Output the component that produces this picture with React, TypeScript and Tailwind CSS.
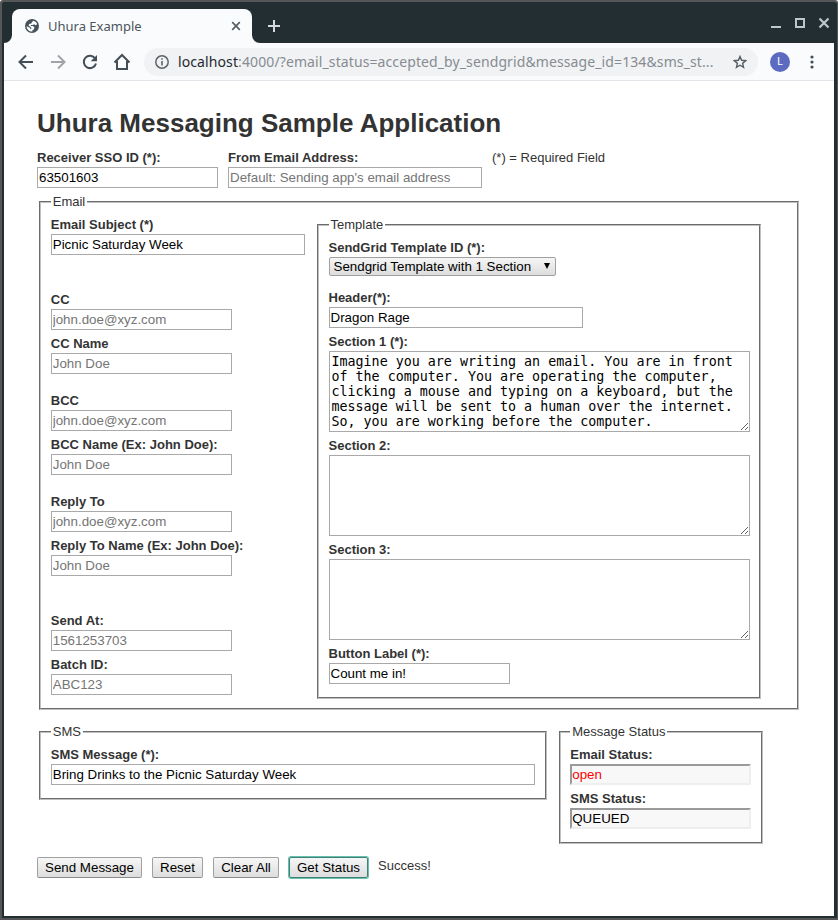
import React from "react";

const inputBase =
  "block h-[21px] border border-[#a9a9a9] bg-white p-px text-[13.333px] leading-[15px] text-black outline-none placeholder:text-[#757575]";

function Field({ label, value, placeholder, width = "w-[181px]" }: { label: string; value?: string; placeholder?: string; width?: string }) {
  return (
    <label className="flex flex-col items-start gap-[2px]">
      <span className="h-[15px] leading-[15px] font-bold whitespace-nowrap">{label}</span>
      <input className={`${inputBase} ${width}`} defaultValue={value} placeholder={placeholder} />
    </label>
  );
}

function Area({ label, value }: { label: string; value?: string }) {
  return (
    <label className="flex flex-col items-start gap-[2px]">
      <span className="h-[15px] leading-[15px] font-bold">{label}</span>
      <textarea
        className="block h-[81px] w-[421px] resize overflow-auto border border-[#a9a9a9] bg-white p-[2px] font-['DejaVu_Sans_Mono',monospace] text-[13.333px] leading-[15px] text-black outline-none"
        defaultValue={value}
        spellCheck={false}
      />
    </label>
  );
}

function Status({ label, value, color }: { label: string; value: string; color: string }) {
  return (
    <label className="flex flex-col items-start gap-[2px]">
      <span className="h-[15px] leading-[15px] font-bold">{label}</span>
      <input
        readOnly
        value={value}
        className={`block h-[21px] w-[181px] border-2 border-t-[#9a9a9a] border-r-[#eeeeee] border-b-[#eeeeee] border-l-[#9a9a9a] bg-[#f8f8f8] text-[13.333px] leading-[15px] outline-none ${color}`}
      />
    </label>
  );
}

function Group({ title, className, children }: { title: string; className: string; children: React.ReactNode }) {
  return (
    <fieldset className={`min-w-0 border-2 border-[#c0c0c0] pt-[7px] pl-[9.75px] [border-style:groove] ${className}`}>
      <legend className="h-4 px-[2px] leading-4">{title}</legend>
      {children}
    </fieldset>
  );
}

function Button({ children, width, focused = false }: { children: string; width: string; focused?: boolean }) {
  return (
    <button
      className={`h-[21px] rounded-[2px] border bg-linear-to-b from-[#f6f6f6] to-[#dddddd] text-[13.333px] leading-[19px] whitespace-nowrap text-black ${width} ${
        focused ? "border-[#3f8377] shadow-[0_0_0_1px_#67bfb0]" : "border-[#a0a0a0] border-b-[#8c8c8c]"
      }`}
    >
      {children}
    </button>
  );
}

function TitleBar() {
  return (
    <div className="flex h-[41px] items-end bg-[#232e33] pl-2">
      <div className="relative flex h-[34px] w-[240px] items-center rounded-t-lg bg-[#fafbfd] pr-[10px] pl-[13px] text-[#4a555b]">
        <svg className="absolute bottom-0 -left-2" width="8" height="8"><path d="M8 0v8H0a8 8 0 0 0 8-8Z" fill="#fafbfd" /></svg>
        <svg className="absolute -right-2 bottom-0" width="8" height="8"><path d="M0 0v8h8a8 8 0 0 1-8-8Z" fill="#fafbfd" /></svg>
        <svg width="14" height="14" viewBox="0 0 14 14" className="shrink-0">
          <circle cx="7" cy="7" r="7" fill="#45525a" />
          <path d="M8.300 1.700C10.200 2.200 11.700 3.500 12.200 5.300L10.500 6.200 9 5.200 7.700 6H5.600L6.200 7.100H8L9.500 8.600 8.800 10.400 7.400 11.300V12.600C4.300 12.800 1.600 10.400 1.500 7.300L4.600 8.600 5.400 10 6.600 9.300 5.600 7.900 3.500 6.500 4.200 4.900 6.300 4.500 6.900 3.200Z" fill="#fafbfd" />
        </svg>
        <span className="ml-[9px] text-[13px] leading-[18px]">Uhura Example</span>
        <svg className="ml-auto" width="12" height="12" viewBox="0 0 12 12"><path d="m2.200 2.200 7.600 7.600m0-7.600-7.600 7.600" stroke="#556067" strokeWidth="1.700" /></svg>
      </div>
      <svg className="mb-[11px] ml-4" width="12" height="12"><path d="M6 0v12M0 6h12" stroke="#d3dbde" strokeWidth="2" /></svg>
      <svg className="mr-[3px] mb-[11px] ml-auto" width="60" height="16">
        <path d="M0 11h10" stroke="#b9c8cd" strokeWidth="2" />
        <rect x="25" y="3" width="8" height="8" fill="none" stroke="#b9c8cd" strokeWidth="2" />
        <path d="m48.500 2.500 9 9m0-9-9 9" stroke="#b9c8cd" strokeWidth="2.200" />
      </svg>
    </div>
  );
}

function Toolbar() {
  return (
    <div className="flex h-[38px] items-center border-b border-[#e1e4e9] bg-[#fafbfd] pr-[20px] pl-[14px]">
      <svg width="16" height="16" viewBox="0 0 16 16" fill="none" stroke="#434e56" strokeWidth="2"><path d="M15 8H2M8 1.500 1.500 8 8 14.500" /></svg>
      <svg className="ml-4" width="16" height="16" viewBox="0 0 16 16" fill="none" stroke="#a0a4a7" strokeWidth="2"><path d="M1 8h13M8 1.500 14.500 8 8 14.500" /></svg>
      <svg className="ml-4" width="16" height="16" viewBox="0 0 16 16"><path d="M13.200 4.500A6.200 6.200 0 1 0 14 9.500" fill="none" stroke="#434e56" strokeWidth="2" /><path d="M15 1v6.300H8.700Z" fill="#434e56" /></svg>
      <svg className="ml-[15px]" width="18" height="18" viewBox="0 0 18 18" fill="none" stroke="#434e56" strokeWidth="2"><path d="M1.500 9.500 9 2l7.500 7.500M4 8v8h10V8" /></svg>
      <div className="ml-[13px] flex h-7 w-[614px] items-center rounded-full bg-[#f1f2f4] pr-[11px] pl-[11px]">
        <svg width="14" height="14" viewBox="0 0 14 14" className="shrink-0"><circle cx="7" cy="7" r="6.200" fill="none" stroke="#5c6368" strokeWidth="1.500" /><path d="M7 6v4.500M7 3.300v1.500" stroke="#5c6368" strokeWidth="1.600" /></svg>
        <span className="ml-[9px] text-[14px] leading-5 tracking-[0.105px] whitespace-nowrap text-[#868c91]"><span className="text-[#25292d]">localhost</span>:4000/?email_status=accepted_by_sendgrid&amp;message_id=134&amp;sms_st...</span>
        <svg className="ml-auto shrink-0" width="14" height="14" viewBox="0 0 14 14"><path d="m7 1.500 1.600 3.800 4.100.35-3.100 2.700.95 4.050L7 10.250 3.450 12.400l.95-4.050-3.100-2.700 4.100-.35Z" fill="none" stroke="#555d63" strokeWidth="1.400" /></svg>
      </div>
      <span className="ml-[12px] flex h-5 w-5 items-center justify-center rounded-full bg-[#5c6bc0] text-[11px] text-white">L</span>
      <svg className="ml-auto" width="4" height="14"><circle cx="2" cy="2" r="1.600" fill="#434e56" /><circle cx="2" cy="7" r="1.600" fill="#434e56" /><circle cx="2" cy="12" r="1.600" fill="#434e56" /></svg>
    </div>
  );
}

export default function App() {
  return (
    <div className="h-[920px] w-[838px] overflow-hidden rounded-t-[3px] border-2 border-r-[1px] border-[#555657] bg-[#232e33] font-['Liberation_Sans',Arial,sans-serif] text-[13px] text-[#333333]">
      <div className="flex h-[914px] flex-col border-r-[3px] border-l-2 border-[#232e33] bg-white">
        <header className="font-['Noto_Sans',sans-serif]">
          <TitleBar />
          <Toolbar />
        </header>
        <main className="px-[33px] pt-[27px]">
          <h1 className="h-[30px] text-[26px] leading-[30px] font-bold">Uhura Messaging Sample Application</h1>
          <div className="mt-[12px] flex gap-[10px]">
            <Field label="Receiver SSO ID (*):" value="63501603" />
            <Field label="From Email Address:" placeholder="Default: Sending app's email address" width="w-[254px]" />
            <span className="leading-[15px]">(*) = Required Field</span>
          </div>
          <Group title="Email" className="mt-[6px] ml-[2px] h-[516px] w-[760px]">
            <div className="flex">
              <div className="flex w-[266px] flex-col">
                <Field label="Email Subject (*)" value="Picnic Saturday Week" width="w-[254px]" />
                <div className="mt-[37px] flex flex-col gap-[6px]">
                  <Field label="CC" placeholder="john.doe@xyz.com" />
                  <Field label="CC Name" placeholder="John Doe" />
                </div>
                <div className="mt-[19px] flex flex-col gap-[6px]">
                  <Field label="BCC" placeholder="john.doe@xyz.com" />
                  <Field label="BCC Name (Ex: John Doe):" placeholder="John Doe" />
                </div>
                <div className="mt-[19px] flex flex-col gap-[6px]">
                  <Field label="Reply To" placeholder="john.doe@xyz.com" />
                  <Field label="Reply To Name (Ex: John Doe):" placeholder="John Doe" />
                </div>
                <div className="mt-[37px] flex flex-col gap-[6px]">
                  <Field label="Send At:" placeholder="1561253703" />
                  <Field label="Batch ID:" placeholder="ABC123" />
                </div>
              </div>
              <Group title="Template" className="h-[482px] w-[444px]">
                <div className="flex flex-col gap-[6px]">
                  <div className="mb-2 flex flex-col items-start gap-[2px]">
                    <span className="h-[15px] leading-[15px] font-bold">SendGrid Template ID (*):</span>
                    <button className="flex h-[19px] w-[227px] items-center justify-between rounded-[2px] border border-[#a0a0a0] bg-linear-to-b from-[#f6f6f6] to-[#dddddd] pr-[5px] pl-[4px] text-[13.333px] leading-[17px] text-black">
                      Sendgrid Template with 1 Section
                      <svg className="mb-px" width="6" height="6"><path d="M0 0h6L3 6Z" fill="black" /></svg>
                    </button>
                  </div>
                  <Field label="Header(*):" value="Dragon Rage" width="w-[254px]" />
                  <Area
                    label="Section 1 (*):"
                    value="Imagine you are writing an email. You are in front of the computer. You are operating the computer, clicking a mouse and typing on a keyboard, but the message will be sent to a human over the internet. So, you are working before the computer."
                  />
                  <Area label="Section 2:" />
                  <Area label="Section 3:" />
                  <Field label="Button Label (*):" value="Count me in!" />
                </div>
              </Group>
            </div>
          </Group>
          <div className="mt-[14px] ml-[2px] flex h-[120px] items-start gap-[11.5px]">
            <Group title="SMS" className="h-[76px] w-[508px]">
              <Field label="SMS Message (*):" value="Bring Drinks to the Picnic Saturday Week" width="w-[484px]" />
            </Group>
            <Group title="Message Status" className="h-[120px] w-[204px]">
              <div className="flex flex-col gap-[6px]">
                <Status label="Email Status:" value="open" color="text-[#ff0000]" />
                <Status label="SMS Status:" value="QUEUED" color="text-black" />
              </div>
            </Group>
          </div>
          <div className="mt-[13px] flex gap-[10px]">
            <Button width="w-[105px]">Send Message</Button>
            <Button width="w-[51px]">Reset</Button>
            <Button width="w-[66px]">Clear All</Button>
            <Button width="w-[79px]" focused>Get Status</Button>
            <span className="mt-px leading-[15px]">Success!</span>
          </div>
        </main>
      </div>
    </div>
  );
}
